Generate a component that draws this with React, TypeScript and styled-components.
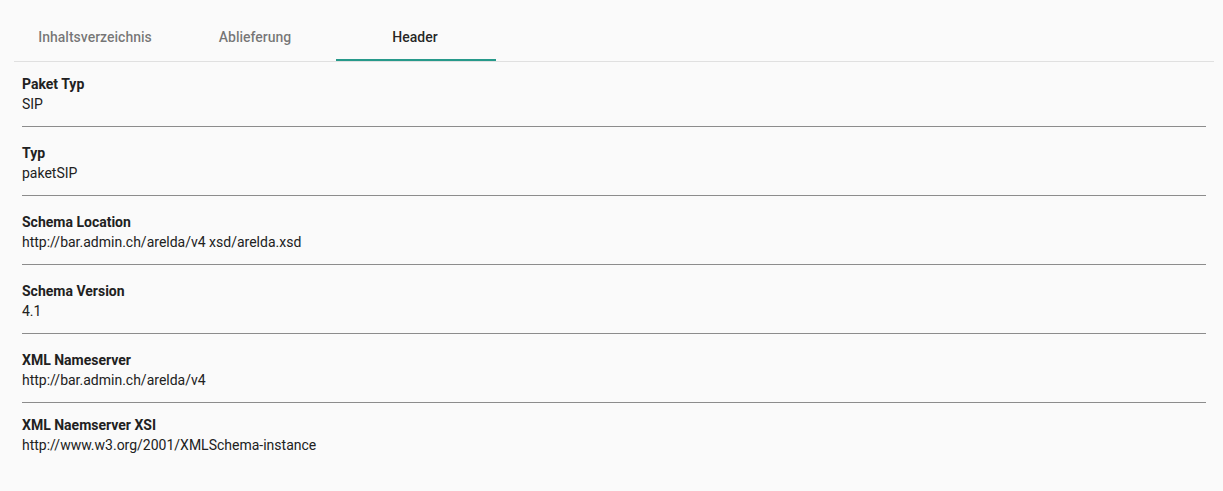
import React, { useState } from "react";
import styled, { createGlobalStyle } from "styled-components";

const GlobalStyle = createGlobalStyle`
	html, body {
		margin: 0;
		padding: 0;
		background: #fafafa;
		font-family: Roboto, "Liberation Sans", sans-serif;
	}
`;

const Page = styled.div`
	padding: 13px 9px 0 14px;
`;

const TabBar = styled.div`
	display: flex;
	height: 48px;
	padding-left: 2px;
	border-bottom: 1px solid #e0e0e0;
`;

const Tab = styled.button<{ $active?: boolean }>`
	width: 160px;
	height: 48px;
	border: none;
	background: transparent;
	padding: 2px 2px 0 0;
	font-family: Roboto, "Liberation Sans", sans-serif;
	font-size: 14px;
	font-weight: 500;
	color: ${(p) => (p.$active ? "rgba(0, 0, 0, 0.87)" : "rgba(0, 0, 0, 0.54)")};
	border-bottom: 2px solid ${(p) => (p.$active ? "#26998a" : "transparent")};
	cursor: pointer;
`;

const Fields = styled.div`
	padding: 12px 8px 0 8px;
`;

const Field = styled.div`
	padding-bottom: 12px;
	margin-bottom: 16px;
	border-bottom: 1px solid #8c8c8c;

	&:last-child {
		margin-top: -4px;
		border-bottom: none;
	}
`;

const Label = styled.div`
	font-size: 14px;
	font-weight: 700;
	line-height: 20px;
	color: #212121;
`;

const Value = styled.div`
	font-size: 14px;
	line-height: 20px;
	color: #212121;
`;

const tabs = ["Inhaltsverzeichnis", "Ablieferung", "Header"];

const fields = [
	{ label: "Paket Typ", value: "SIP" },
	{ label: "Typ", value: "paketSIP" },
	{ label: "Schema Location", value: "http://bar.admin.ch/arelda/v4 xsd/arelda.xsd" },
	{ label: "Schema Version", value: "4.1" },
	{ label: "XML Nameserver", value: "http://bar.admin.ch/arelda/v4" },
	{ label: "XML Naemserver XSI", value: "http://www.w3.org/2001/XMLSchema-instance" },
];

const App: React.FC = () => {
	const [active, setActive] = useState(2);

	return (
		<>
			<GlobalStyle />
			<Page>
				<TabBar>
					{tabs.map((t, i) => (
						<Tab key={t} $active={i === active} onClick={() => setActive(i)}>
							{t}
						</Tab>
					))}
				</TabBar>
				<Fields>
					{fields.map((f) => (
						<Field key={f.label}>
							<Label>{f.label}</Label>
							<Value>{f.value}</Value>
						</Field>
					))}
				</Fields>
			</Page>
		</>
	);
};

export default App;
